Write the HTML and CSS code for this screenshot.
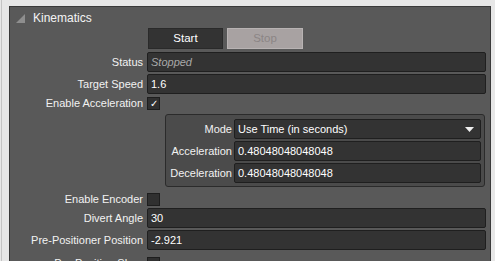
FILE: index.html
```html
<!DOCTYPE html>
<html>
<head>
<meta charset="utf-8">
<link rel="stylesheet" href="styles.css">
</head>
<body>
<div class="frame">
  <div class="panel">
    <div class="header">
      <svg class="tri" width="9" height="9" viewBox="0 0 9 9"><polygon points="9,0 9,9 0,9" fill="#8e8e8e"/></svg>
      <span class="title">Kinematics</span>
    </div>
    <div class="row btnrow">
      <div class="lbl"></div>
      <div class="ctl buttons">
        <div class="btn start">Start</div>
        <div class="btn stop">Stop</div>
      </div>
    </div>
    <div class="row">
      <div class="lbl">Status</div>
      <div class="ctl"><div class="input ro">Stopped</div></div>
    </div>
    <div class="row">
      <div class="lbl">Target Speed</div>
      <div class="ctl"><div class="input">1.6</div></div>
    </div>
    <div class="row chkrow accel">
      <div class="lbl">Enable Acceleration</div>
      <div class="ctl"><div class="chk">&#10003;</div></div>
    </div>
    <div class="groupwrap">
      <div class="group">
        <div class="grow">
          <div class="glbl">Mode</div>
          <div class="input select"><span>Use Time (in seconds)</span><svg width="9" height="5" viewBox="0 0 9 5"><polygon points="0,0 9,0 4.5,5" fill="#f0f0f0"/></svg></div>
        </div>
        <div class="grow">
          <div class="glbl">Acceleration</div>
          <div class="input">0.48048048048048</div>
        </div>
        <div class="grow">
          <div class="glbl">Deceleration</div>
          <div class="input">0.48048048048048</div>
        </div>
      </div>
    </div>
    <div class="row chkrow enc">
      <div class="lbl">Enable Encoder</div>
      <div class="ctl"><div class="chk"></div></div>
    </div>
    <div class="row">
      <div class="lbl">Divert Angle</div>
      <div class="ctl"><div class="input">30</div></div>
    </div>
    <div class="row">
      <div class="lbl">Pre-Positioner Position</div>
      <div class="ctl"><div class="input">-2.921</div></div>
    </div>
    <div class="row chkrow shoe">
      <div class="lbl">Pre-Position Shoe</div>
      <div class="ctl"><div class="chk"></div></div>
    </div>
  </div>
</div>
</body>
</html>
```
FILE: styles.css
```css
html, body {
  margin: 0;
  padding: 0;
  height: 261px;
  overflow: hidden;
  background: #e7e7e7;
  font-family: "Liberation Sans", Arial, sans-serif;
  font-size: 11px;
  color: #f2f2f2;
}
.frame {
  height: 261px;
  box-sizing: border-box;
  padding: 6px 4px 0 7px;
  border-left: 1px solid #c4c4c4;
  margin-left: 1px;
}
.panel {
  height: 260px;
  box-sizing: border-box;
  background: #595959;
  border: 1px solid #3a3a3a;
  border-bottom: none;
  padding-right: 4px;
  display: flex;
  flex-direction: column;
}
.header {
  height: 21px;
  flex: none;
  display: flex;
  align-items: center;
  padding-left: 6px;
}
.tri { margin-right: 8px; margin-top: 1px; }
.title { font-size: 12px; color: #f4f4f4; }
.row {
  display: grid;
  grid-template-columns: 133px 1fr;
  column-gap: 4px;
  height: 22px;
  flex: none;
  align-items: start;
}
.lbl {
  text-align: right;
  height: 20px;
  line-height: 20px;
  white-space: nowrap;
}
.btnrow { height: 24px; }
.buttons { display: flex; gap: 4px; padding-left: 1px; }
.btn {
  height: 21px;
  box-sizing: border-box;
  line-height: 19px;
  text-align: center;
  font-size: 11.5px;
}
.start {
  width: 75px;
  background: #333333;
  border: 1px solid #2a2a2a;
  color: #ffffff;
}
.stop {
  width: 76px;
  background: #a8a2a2;
  border: 1px solid #b8b3b3;
  color: #8b8585;
}
.input {
  height: 20px;
  box-sizing: border-box;
  background: #333333;
  border: 1px solid #1f1f1f;
  border-radius: 2px;
  padding-left: 3px;
  line-height: 18px;
  color: #ffffff;
  font-size: 11px;
  white-space: nowrap;
}
.ro { font-style: italic; color: #a9a9a9; }
.chkrow { align-items: center; }
.chkrow .lbl { height: auto; line-height: 13px; }
.accel { height: 18px; align-items: start; padding-top: 1px; box-sizing: border-box; }
.enc { height: 21px; align-items: start; padding-top: 6px; box-sizing: border-box; }
.shoe { height: 20px; align-items: start; padding-top: 5px; box-sizing: border-box; }
.chk {
  width: 13px;
  height: 13px;
  box-sizing: border-box;
  background: #303030;
  border: 1px solid #1e1e1e;
  color: #ffffff;
  font-size: 10px;
  line-height: 11px;
  text-align: center;
}
.groupwrap {
  flex: none;
  padding-left: 155px;
  padding-right: 1px;
}
.group {
  height: 73px;
  box-sizing: border-box;
  background: #4b4b4b;
  border: 1px solid #2b2b2b;
  border-radius: 3px;
  padding: 4px 3px 0 0;
  display: flex;
  flex-direction: column;
  gap: 2px;
}
.grow {
  display: grid;
  grid-template-columns: 66px 1fr;
  column-gap: 2px;
  align-items: center;
  height: 20px;
}
.glbl { text-align: right; white-space: nowrap; }
.select {
  display: flex;
  align-items: center;
  justify-content: space-between;
  padding-right: 6px;
}
```
